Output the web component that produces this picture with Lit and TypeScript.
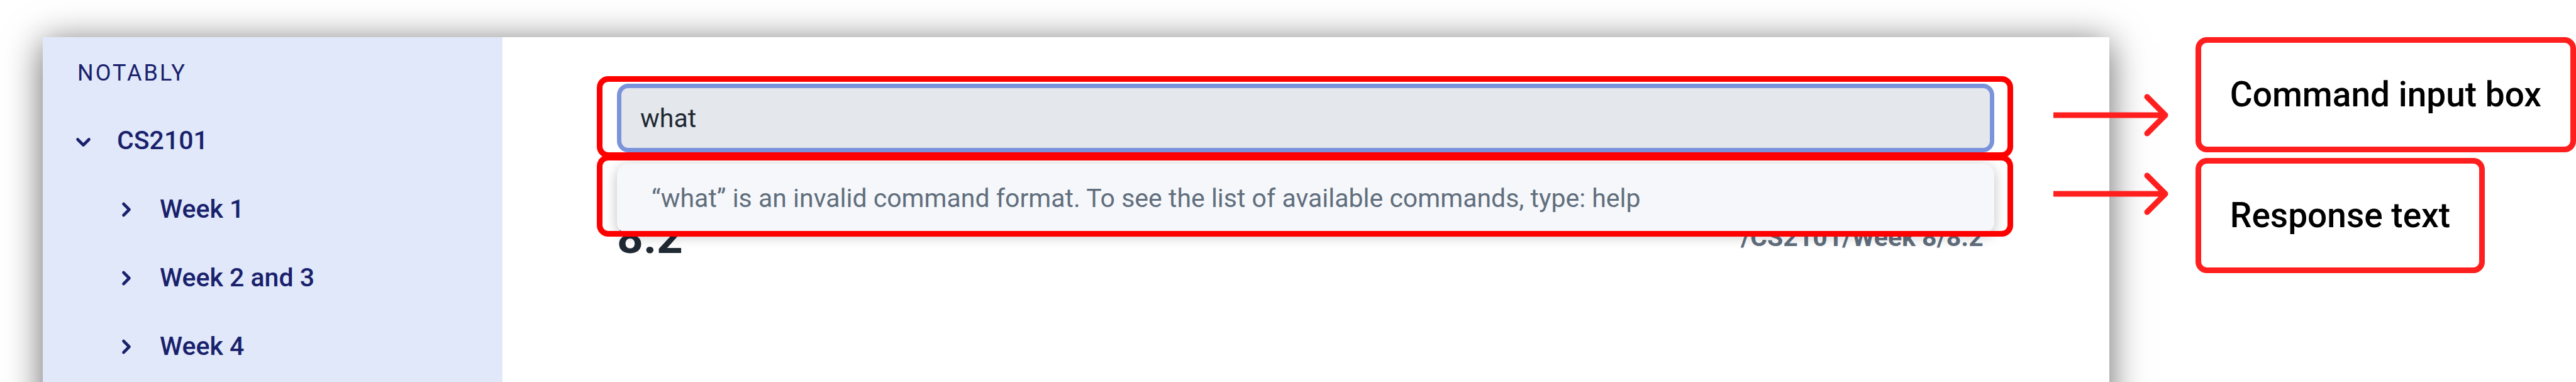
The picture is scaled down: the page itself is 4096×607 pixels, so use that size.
import { LitElement, html, css, svg } from "lit";
import { customElement, property, state } from "lit/decorators.js";

interface Note {
  title: string;
  open?: boolean;
  children?: Note[];
}

const NOTES: Note[] = [
  {
    title: "CS2101",
    open: true,
    children: [{ title: "Week 1" }, { title: "Week 2 and 3" }, { title: "Week 4" }],
  },
];

const chevronDown = svg`<path d="M6.5 13.5 L15.5 22.5 L24.5 13.5" />`;
const chevronRight = svg`<path d="M11.5 7 L20.5 16 L11.5 25" />`;

@customElement("note-tree")
class NoteTree extends LitElement {
  @property({ attribute: false }) notes: Note[] = [];

  static styles = css`
    :host {
      display: block;
    }
    .list {
      list-style: none;
      margin: 0;
      padding: 0;
    }
    .list .list {
      padding-left: 68px;
    }
    .row {
      display: flex;
      align-items: center;
      gap: 37px;
      width: 100%;
      margin: 0;
      padding: 0;
      border: 0;
      background: none;
      color: #19216c;
      font: 500 41px/109px Roboto, sans-serif;
      text-align: left;
      white-space: nowrap;
      cursor: pointer;
    }
    .icon {
      width: 32px;
      height: 32px;
      flex: none;
      fill: none;
      stroke: currentColor;
      stroke-width: 4.6;
      stroke-linecap: round;
      stroke-linejoin: round;
    }
  `;

  private renderList(notes: Note[]): unknown {
    return html`<ul class="list">
      ${notes.map(
        (note) => html`<li>
          <button class="row" type="button" aria-expanded=${note.open ? "true" : "false"}>
            <svg class="icon" viewBox="0 0 32 32" aria-hidden="true">
              ${note.open ? chevronDown : chevronRight}
            </svg>
            <span>${note.title}</span>
          </button>
          ${note.open && note.children ? this.renderList(note.children) : ""}
        </li>`
      )}
    </ul>`;
  }

  render() {
    return this.renderList(this.notes);
  }
}

@customElement("callout-arrow")
class CalloutArrow extends LitElement {
  static styles = css`
    :host {
      display: block;
      width: 184px;
      height: 68px;
    }
    .arrow {
      display: block;
      width: 100%;
      height: 100%;
      fill: none;
      stroke: #ff1f1f;
      stroke-width: 9;
      stroke-linecap: round;
      stroke-linejoin: round;
    }
    .shaft {
      stroke-linecap: butt;
    }
  `;

  render() {
    return html`<svg class="arrow" viewBox="0 0 184 68" aria-hidden="true">
      <path class="shaft" d="M0 34 H176" />
      <path d="M149 5 L178 34 L149 63" />
    </svg>`;
  }
}

@customElement("app-root")
class AppRoot extends LitElement {
  @state() private command = "what";

  static styles = css`
    :host {
      display: block;
      background: #fff;
      font-family: Roboto, sans-serif;
    }
    .page {
      box-sizing: border-box;
      display: flex;
      gap: 137px;
      min-height: 100vh;
      padding: 59px 0 0 68px;
      overflow: hidden;
    }
    .window {
      flex: 1;
      min-width: 0;
      display: flex;
      margin-bottom: -80px;
      background: #fff;
      box-shadow: 0 8px 54px rgba(0, 0, 0, 0.6);
    }
    .sidebar {
      box-sizing: border-box;
      width: 731px;
      flex: none;
      padding: 35px 49px 0;
      background: #e0e8f9;
      color: #19216c;
    }
    .brand {
      margin: 0 0 31px 6px;
      font-size: 36px;
      line-height: 44px;
      font-weight: 400;
      letter-spacing: 3px;
    }
    .main {
      flex: 1;
      min-width: 0;
      padding: 62px 153px 0 150px;
    }
    .console {
      position: relative;
    }
    .frame {
      position: relative;
      padding: 12px 30px 9px 32px;
    }
    .frame::after {
      content: "";
      position: absolute;
      inset: 0;
      border: 9px solid #f00;
      border-radius: 18px;
      pointer-events: none;
    }
    .popup {
      position: absolute;
      inset: 125px 0 auto;
      padding: 14px 30px 5px 32px;
    }
    .arrow {
      position: absolute;
      left: calc(100% + 64px);
      top: 28px;
    }
    .command {
      display: block;
      box-sizing: border-box;
      width: 100%;
      height: 109px;
      margin: 0;
      padding: 0 30px;
      border: 7px solid #7b93db;
      border-radius: 18px;
      outline: 0;
      background: #e4e7eb;
      color: #1f2933;
      font: 400 41px/48px Roboto, sans-serif;
    }
    .response {
      margin: 0;
      padding: 0 55px;
      border-radius: 18px;
      background: #f5f7fb;
      box-shadow: 0 4px 20px rgba(0, 0, 0, 0.25);
      color: #616e7c;
      font-size: 41px;
      line-height: 111px;
      white-space: nowrap;
    }
    .note {
      display: flex;
      justify-content: space-between;
      align-items: center;
      margin: 84px 47px 0 32px;
    }
    .title {
      margin: 0;
      color: #1f2933;
      font-size: 73px;
      line-height: 84px;
      font-weight: 700;
    }
    .path {
      color: #616e7c;
      font-size: 41px;
      line-height: 48px;
      font-weight: 700;
    }
    .legend {
      flex: none;
      display: flex;
      flex-direction: column;
      align-items: flex-start;
      gap: 9px;
    }
    .label {
      padding: 50px 46px 51px;
      border: 9px solid #ff1f1f;
      border-radius: 18px;
      color: #000;
      font-size: 55px;
      line-height: 64px;
      font-weight: 500;
      white-space: nowrap;
    }
  `;

  render() {
    return html`
      <div class="page">
        <div class="window">
          <nav class="sidebar" aria-label="Notes">
            <h1 class="brand">NOTABLY</h1>
            <note-tree .notes=${NOTES}></note-tree>
          </nav>
          <main class="main">
            <div class="console">
              <div class="frame">
                <input
                  class="command"
                  type="text"
                  aria-label="Command"
                  spellcheck="false"
                  .value=${this.command}
                  @input=${(e: Event) => (this.command = (e.target as HTMLInputElement).value)}
                />
                <callout-arrow class="arrow"></callout-arrow>
              </div>
              <div class="frame popup">
                <p class="response" role="status">“what” is an invalid command format. To see the list of available commands, type: help</p>
                <callout-arrow class="arrow"></callout-arrow>
              </div>
            </div>
            <header class="note">
              <h2 class="title">8.2</h2>
              <span class="path">/CS2101/Week 8/8.2</span>
            </header>
          </main>
        </div>
        <aside class="legend">
          <div class="label">Command input box</div>
          <div class="label">Response text</div>
        </aside>
      </div>
    `;
  }
}
